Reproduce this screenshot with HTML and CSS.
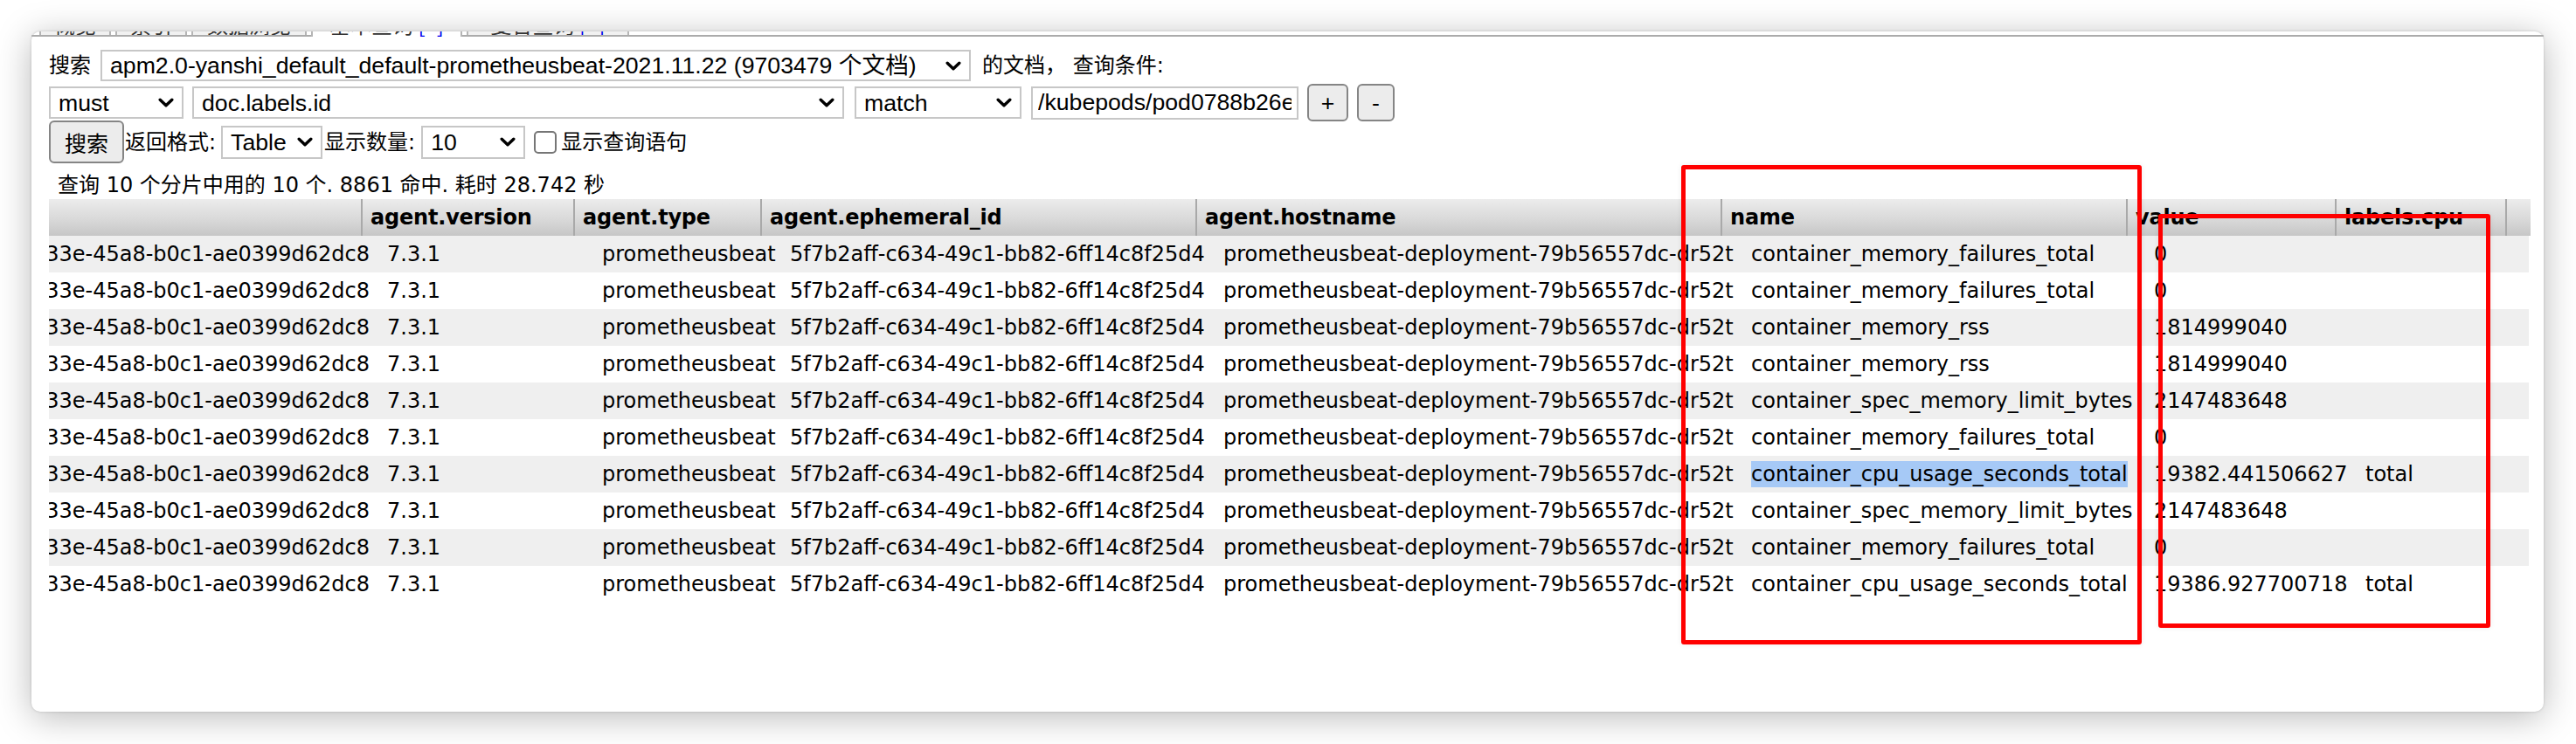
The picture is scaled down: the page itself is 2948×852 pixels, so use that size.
FILE: index.html
```html
<!DOCTYPE html>
<html lang="zh-CN">
<head>
<meta charset="utf-8">
<title>elasticsearch-head 基本查询</title>
<link rel="stylesheet" href="styles.css">
</head>
<body>
<div class="window">
  <div class="tabs">
    <div class="tab t1"><span>概览</span></div>
    <div class="tab t2"><span>索引</span></div>
    <div class="tab t3"><span>数据浏览</span></div>
    <div class="tab t4 active"><span>基本查询 <b class="plus">[+]</b></span></div>
    <div class="tab t5"><span>复合查询 <b class="plus">[+]</b></span></div>
  </div>
  <div class="content">
    <div class="row r1">
      <span class="lbl">搜索</span>
      <div class="select s-index"><span>apm2.0-yanshi_default_default-prometheusbeat-2021.11.22 (9703479 个文档)</span><svg class="chev" viewBox="0 0 18 11" width="18" height="11"><path d="M2.2 2.2 L9 8.8 L15.8 2.2" fill="none" stroke="#000" stroke-width="3.4" stroke-linecap="round" stroke-linejoin="round"/></svg></div>
      <span class="lbl after-index">的文档， 查询条件:</span>
    </div>
    <div class="row r2">
      <div class="select s-must"><span>must</span><svg class="chev" viewBox="0 0 18 11" width="18" height="11"><path d="M2.2 2.2 L9 8.8 L15.8 2.2" fill="none" stroke="#000" stroke-width="3.4" stroke-linecap="round" stroke-linejoin="round"/></svg></div>
      <div class="select s-field"><span>doc.labels.id</span><svg class="chev" viewBox="0 0 18 11" width="18" height="11"><path d="M2.2 2.2 L9 8.8 L15.8 2.2" fill="none" stroke="#000" stroke-width="3.4" stroke-linecap="round" stroke-linejoin="round"/></svg></div>
      <div class="select s-match"><span>match</span><svg class="chev" viewBox="0 0 18 11" width="18" height="11"><path d="M2.2 2.2 L9 8.8 L15.8 2.2" fill="none" stroke="#000" stroke-width="3.4" stroke-linecap="round" stroke-linejoin="round"/></svg></div>
      <input class="qinput" type="text" value="/kubepods/pod0788b26e-b33e-45a8-b0c1-ae0399d62dc8">
      <button class="btn b-plus">+</button>
      <button class="btn b-minus">-</button>
    </div>
    <div class="row r3">
      <button class="btn b-search">搜索</button>
      <span class="lbl l-fmt">返回格式:</span>
      <div class="select s-table"><span>Table</span><svg class="chev" viewBox="0 0 18 11" width="18" height="11"><path d="M2.2 2.2 L9 8.8 L15.8 2.2" fill="none" stroke="#000" stroke-width="3.4" stroke-linecap="round" stroke-linejoin="round"/></svg></div>
      <span class="lbl l-num">显示数量:</span>
      <div class="select s-num"><span>10</span><svg class="chev" viewBox="0 0 18 11" width="18" height="11"><path d="M2.2 2.2 L9 8.8 L15.8 2.2" fill="none" stroke="#000" stroke-width="3.4" stroke-linecap="round" stroke-linejoin="round"/></svg></div>
      <span class="checkbox"></span>
      <span class="lbl l-chk">显示查询语句</span>
    </div>
    <div class="status">查询 10 个分片中用的 10 个. 8861 命中. 耗时 28.742 秒</div>
    <div class="table">
      <div class="thead">
        <div class="th"></div>
        <div class="th">agent.version</div>
        <div class="th">agent.type</div>
        <div class="th">agent.ephemeral_id</div>
        <div class="th">agent.hostname</div>
        <div class="th">name</div>
        <div class="th">value</div>
        <div class="th">labels.cpu</div>
        <div class="th"></div>
      </div>
      <div class="tbody">
        <div class="tr"><div class="td id"><span>e0a4c5d1-b33e-45a8-b0c1-ae0399d62dc8</span></div><div class="td">7.3.1</div><div class="td">prometheusbeat</div><div class="td">5f7b2aff-c634-49c1-bb82-6ff14c8f25d4</div><div class="td">prometheusbeat-deployment-79b56557dc-dr52t</div><div class="td">container_memory_failures_total</div><div class="td">0</div><div class="td"></div></div>
        <div class="tr"><div class="td id"><span>e0a4c5d1-b33e-45a8-b0c1-ae0399d62dc8</span></div><div class="td">7.3.1</div><div class="td">prometheusbeat</div><div class="td">5f7b2aff-c634-49c1-bb82-6ff14c8f25d4</div><div class="td">prometheusbeat-deployment-79b56557dc-dr52t</div><div class="td">container_memory_failures_total</div><div class="td">0</div><div class="td"></div></div>
        <div class="tr"><div class="td id"><span>e0a4c5d1-b33e-45a8-b0c1-ae0399d62dc8</span></div><div class="td">7.3.1</div><div class="td">prometheusbeat</div><div class="td">5f7b2aff-c634-49c1-bb82-6ff14c8f25d4</div><div class="td">prometheusbeat-deployment-79b56557dc-dr52t</div><div class="td">container_memory_rss</div><div class="td">1814999040</div><div class="td"></div></div>
        <div class="tr"><div class="td id"><span>e0a4c5d1-b33e-45a8-b0c1-ae0399d62dc8</span></div><div class="td">7.3.1</div><div class="td">prometheusbeat</div><div class="td">5f7b2aff-c634-49c1-bb82-6ff14c8f25d4</div><div class="td">prometheusbeat-deployment-79b56557dc-dr52t</div><div class="td">container_memory_rss</div><div class="td">1814999040</div><div class="td"></div></div>
        <div class="tr"><div class="td id"><span>e0a4c5d1-b33e-45a8-b0c1-ae0399d62dc8</span></div><div class="td">7.3.1</div><div class="td">prometheusbeat</div><div class="td">5f7b2aff-c634-49c1-bb82-6ff14c8f25d4</div><div class="td">prometheusbeat-deployment-79b56557dc-dr52t</div><div class="td">container_spec_memory_limit_bytes</div><div class="td">2147483648</div><div class="td"></div></div>
        <div class="tr"><div class="td id"><span>e0a4c5d1-b33e-45a8-b0c1-ae0399d62dc8</span></div><div class="td">7.3.1</div><div class="td">prometheusbeat</div><div class="td">5f7b2aff-c634-49c1-bb82-6ff14c8f25d4</div><div class="td">prometheusbeat-deployment-79b56557dc-dr52t</div><div class="td">container_memory_failures_total</div><div class="td">0</div><div class="td"></div></div>
        <div class="tr"><div class="td id"><span>e0a4c5d1-b33e-45a8-b0c1-ae0399d62dc8</span></div><div class="td">7.3.1</div><div class="td">prometheusbeat</div><div class="td">5f7b2aff-c634-49c1-bb82-6ff14c8f25d4</div><div class="td">prometheusbeat-deployment-79b56557dc-dr52t</div><div class="td"><span class="sel">container_cpu_usage_seconds_total</span></div><div class="td">19382.441506627</div><div class="td">total</div></div>
        <div class="tr"><div class="td id"><span>e0a4c5d1-b33e-45a8-b0c1-ae0399d62dc8</span></div><div class="td">7.3.1</div><div class="td">prometheusbeat</div><div class="td">5f7b2aff-c634-49c1-bb82-6ff14c8f25d4</div><div class="td">prometheusbeat-deployment-79b56557dc-dr52t</div><div class="td">container_spec_memory_limit_bytes</div><div class="td">2147483648</div><div class="td"></div></div>
        <div class="tr"><div class="td id"><span>e0a4c5d1-b33e-45a8-b0c1-ae0399d62dc8</span></div><div class="td">7.3.1</div><div class="td">prometheusbeat</div><div class="td">5f7b2aff-c634-49c1-bb82-6ff14c8f25d4</div><div class="td">prometheusbeat-deployment-79b56557dc-dr52t</div><div class="td">container_memory_failures_total</div><div class="td">0</div><div class="td"></div></div>
        <div class="tr"><div class="td id"><span>e0a4c5d1-b33e-45a8-b0c1-ae0399d62dc8</span></div><div class="td">7.3.1</div><div class="td">prometheusbeat</div><div class="td">5f7b2aff-c634-49c1-bb82-6ff14c8f25d4</div><div class="td">prometheusbeat-deployment-79b56557dc-dr52t</div><div class="td">container_cpu_usage_seconds_total</div><div class="td">19386.927700718</div><div class="td">total</div></div>
      </div>
    </div>
  </div>
  <div class="mark mark-name"></div>
  <div class="mark mark-value"></div>
</div>
</body>
</html>
```

FILE: styles.css
```css
html, body {
  margin: 0;
  padding: 0;
  background: #ffffff;
}

body {
  font-family: "DejaVu Sans", "Noto Sans CJK SC", sans-serif;
  font-size: 24px;
  color: #000;
  width: 2948px;
  height: 852px;
  overflow: hidden;
}

.window {
  position: relative;
  margin: 36px 0 0 36px;
  width: 2875px;
  height: 779px;
  background: #fff;
  border-radius: 10px;
  box-shadow: 0 0 3px rgba(0, 0, 0, 0.18), 0 6px 40px rgba(0, 0, 0, 0.28);
}

/* ---------- tabs (cut off at the top edge) ---------- */
.tabs {
  display: flex;
  height: 6px;
  padding-left: 9px;
  overflow: hidden;
  background: linear-gradient(to top, #ababab 2px, transparent 2px);
  border-radius: 10px 10px 0 0;
}

.tab {
  flex: none;
  height: 4px;
  overflow: hidden;
  background: #f1f1f1;
  border-left: 2px solid #b5b5b5;
  border-right: 2px solid #b5b5b5;
  margin-right: 5px;
  text-align: center;
  font-family: "Noto Sans CJK SC", sans-serif;
  color: #333;
}

.tab span {
  display: block;
  line-height: 24px;
  margin-top: -20px;
  white-space: nowrap;
}

.tab.active {
  height: 6px;
  background: #fff;
}

.t1 { width: 78px; }
.t2 { width: 78px; }
.t3 { width: 128px; }
.t4 { width: 169px; }
.t5 { width: 182px; }

.plus {
  font-weight: normal;
  color: #0000ee;
}

/* ---------- form ---------- */
.content {
  padding: 15px 15px 0 20px;
}

.row {
  display: flex;
  align-items: center;
}

.r1 { height: 36px; }
.r2 { height: 43px; margin-top: 3px; }
.r3 { height: 49px; margin-top: -1px; }

.lbl {
  font-family: "DejaVu Sans", "Noto Sans CJK SC", sans-serif;
  font-size: 24px;
  line-height: 28px;
  white-space: nowrap;
}

.select {
  box-sizing: border-box;
  display: flex;
  align-items: center;
  justify-content: space-between;
  border: 2px solid #c7c7c7;
  background: #fff;
  padding: 0 9px 0 9px;
  font-family: "Liberation Sans", "Noto Sans CJK SC", sans-serif;
  font-size: 26.67px;
  line-height: 30px;
  white-space: nowrap;
  overflow: hidden;
}

.select span {
  overflow: hidden;
}

.chev {
  flex: none;
  display: block;
}

.s-index { width: 996px; height: 36px; margin-left: 11px; }
.after-index { margin-left: 13px; }

.s-must { width: 154px; height: 37px; }
.s-field { width: 746px; height: 37px; margin-left: 10px; }
.s-match { width: 191px; height: 37px; margin-left: 12px; }

.qinput {
  box-sizing: border-box;
  width: 306px;
  height: 38px;
  margin: 0 0 0 11px;
  padding: 0 6px;
  border: 2px solid #c7c7c7;
  border-radius: 0;
  background: #fff;
  font-family: "Liberation Sans", sans-serif;
  font-size: 26.67px;
  color: #000;
  outline: none;
}

.btn {
  box-sizing: border-box;
  margin: 0;
  padding: 0;
  background: #ececec;
  border: 2px solid #858585;
  border-radius: 6px;
  color: #000;
  font-family: "Liberation Sans", "Noto Sans CJK SC", sans-serif;
  font-size: 26.67px;
  line-height: 30px;
}

.b-plus { width: 47px; height: 43px; margin-left: 10px; }
.b-minus { width: 43px; height: 43px; margin-left: 10px; }
.b-search {
  width: 86px;
  height: 49px;
  font-family: "Noto Sans CJK SC", sans-serif;
  font-size: 25px;
}

.l-fmt { margin-left: 1px; }
.s-table { width: 116px; height: 38px; margin-left: 6px; }
.l-num { margin-left: 2px; }
.s-num { width: 119px; height: 38px; margin-left: 7px; }

.checkbox {
  box-sizing: border-box;
  width: 26px;
  height: 26px;
  margin-left: 10px;
  border: 2px solid #767676;
  border-radius: 5px;
  background: #fff;
}

.l-chk { margin-left: 5px; }

.status {
  margin-top: 12px;
  padding-left: 10px;
  line-height: 26px;
  height: 26px;
  white-space: nowrap;
}

/* ---------- result table ---------- */
.table {
  margin-top: 3px;
  width: 2840px;
}

.thead {
  display: grid;
  grid-template-columns: 357px 243px 214px 498px 601px 464px 239px 195px 29px;
  height: 42px;
  background: linear-gradient(to bottom, #ececec 0%, #d9d9d9 55%, #c6c6c6 100%);
}

.th {
  box-sizing: border-box;
  padding-left: 9px;
  font-weight: bold;
  line-height: 42px;
  white-space: nowrap;
  overflow: hidden;
  letter-spacing: -0.2px;
}

.th + .th {
  border-left: 2px solid #a9a9a9;
}

.tbody {
  width: 2838px;
}

.tr {
  display: grid;
  grid-template-columns: 377px 246px 215px 496px 604px 461px 242px 197px;
  height: 42px;
  align-items: center;
}

.tr:nth-child(odd) {
  background: #efefef;
}

.td {
  box-sizing: border-box;
  padding: 0 10px;
  white-space: nowrap;
  line-height: 42px;
}

.td.id {
  display: flex;
  justify-content: flex-end;
  overflow: hidden;
}

.td.id span {
  flex: none;
}

.sel {
  background: #a6c9f6;
  line-height: 30px;
  display: inline-block;
}

/* ---------- red annotation boxes ---------- */
.mark {
  position: absolute;
  box-sizing: border-box;
  border: 5px solid #ff0000;
  border-radius: 3px;
  box-shadow: 0 0 6px rgba(0, 0, 0, 0.08);
}

.mark-name {
  left: 1888px;
  top: 153px;
  width: 527px;
  height: 549px;
}

.mark-value {
  left: 2434px;
  top: 209px;
  width: 380px;
  height: 474px;
}
```
